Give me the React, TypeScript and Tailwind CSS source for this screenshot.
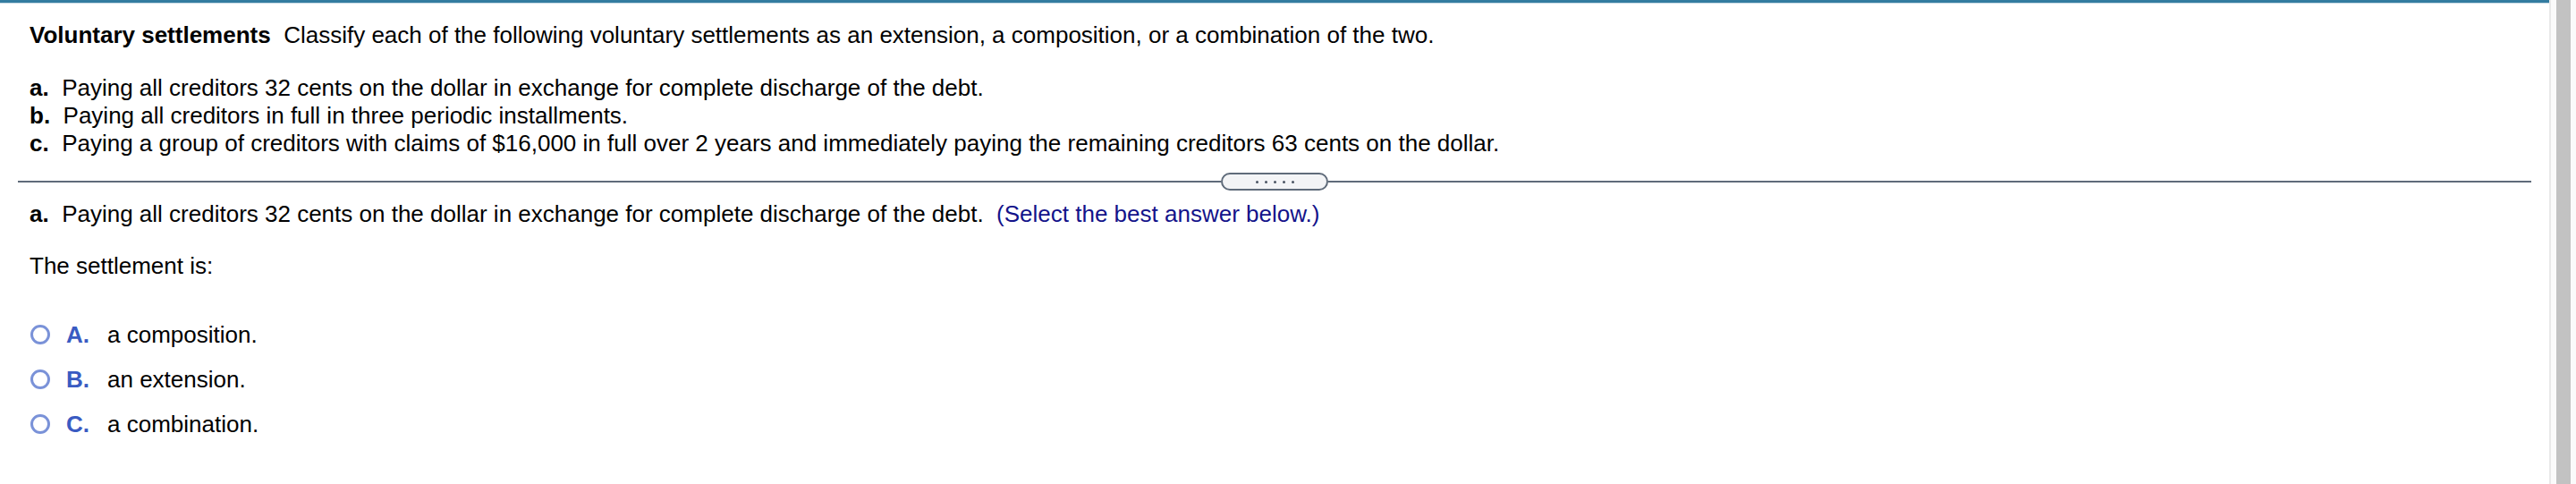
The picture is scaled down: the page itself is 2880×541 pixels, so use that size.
const options = [
  { key: "A.", text: "a composition." },
  { key: "B.", text: "an extension." },
  { key: "C.", text: "a combination." },
];

function Divider() {
  return (
    <div className="mx-[20px] mt-[17px] flex h-[20px] items-center">
      <div className="h-[2px] flex-1 bg-[#5f6b7a]" />
      <div className="flex h-[20px] w-[120px] items-center justify-center gap-[7px] rounded-full border-2 border-[#5f6b7a] bg-[#f3f4f6]">
        {[0, 1, 2, 3, 4].map((i) => (
          <span key={i} className="h-[3px] w-[3px] rounded-full bg-[#4b5563]" />
        ))}
      </div>
      <div className="h-[2px] flex-1 bg-[#5f6b7a]" />
    </div>
  );
}

export default function App() {
  return (
    <div
      className="flex h-[541px] w-full overflow-hidden bg-white text-[26px] leading-[31px] text-black"
      style={{ fontFamily: '"Liberation Sans", Arial, sans-serif' }}
    >
      <main className="min-w-0 flex-1">
        <div className="h-[3px] bg-[#337ca0]" />
        <div className="h-[1px] bg-[#c5d9e3]" />

        <p className="mt-[20px] whitespace-pre pl-[33px]">
          <b>Voluntary settlements</b>
          {"  Classify each of the following voluntary settlements as an extension, a composition, or a combination of the two."}
        </p>

        <div className="mt-[28px] whitespace-pre pl-[33px]">
          <p>
            <b>a.</b>
            {"  Paying all creditors 32 cents on the dollar in exchange for complete discharge of the debt."}
          </p>
          <p>
            <b>b.</b>
            {"  Paying all creditors in full in three periodic installments."}
          </p>
          <p>
            <b>c.</b>
            {"  Paying a group of creditors with claims of $16,000 in full over 2 years and immediately paying the remaining creditors 63 cents on the dollar."}
          </p>
        </div>

        <Divider />

        <p className="mt-[11px] whitespace-pre pl-[33px]">
          <b>a.</b>
          {"  Paying all creditors 32 cents on the dollar in exchange for complete discharge of the debt.  "}
          <span className="text-[#13138a]">(Select the best answer below.)</span>
        </p>

        <p className="mt-[27px] pl-[33px]">The settlement is:</p>

        <div className="mt-[36px] flex flex-col">
          {options.map((o) => (
            <label key={o.key} className="flex h-[50px] items-center pl-[34px]">
              <span className="h-[22px] w-[22px] shrink-0 rounded-full border-[3px] border-[#7a92d8] bg-white" />
              <span className="ml-[18px] w-[46px] font-bold text-[#3a5bc2]">{o.key}</span>
              <span>{o.text}</span>
            </label>
          ))}
        </div>
      </main>

      <aside className="flex h-[541px] w-[30px] shrink-0 border-l-2 border-[#e9e9e9] bg-[#fafafa] px-[6px]">
        <div className="h-full w-[16px] bg-[#c2c2c2]" />
      </aside>
    </div>
  );
}
